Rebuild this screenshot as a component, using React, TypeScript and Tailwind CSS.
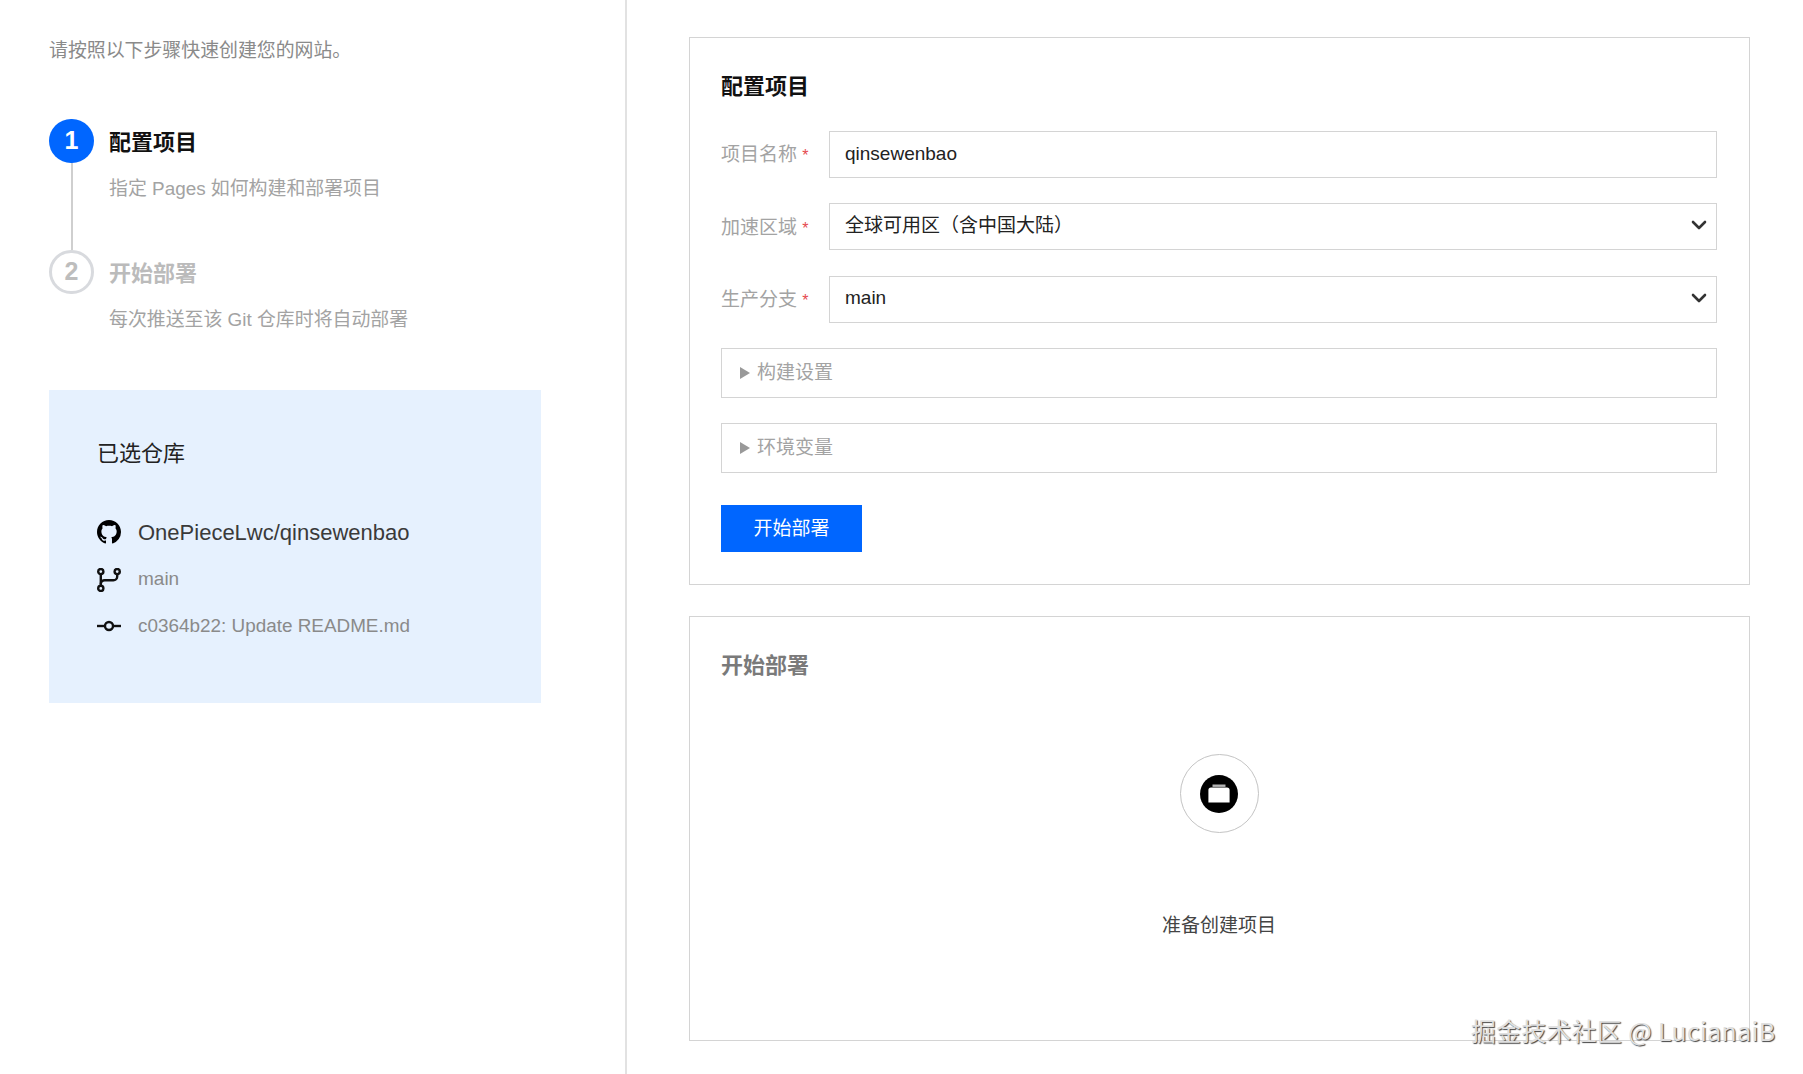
import type { ReactNode } from "react";
import { ChevronDown } from "lucide-react";

const font = "font-['Liberation_Sans','Noto_Sans_CJK_SC',sans-serif]";

const GithubMark = () => (
  <svg width="24" height="24" viewBox="0 0 16 16" fill="#000">
    <path d="M8 0C3.58 0 0 3.58 0 8c0 3.54 2.29 6.53 5.47 7.59.4.07.55-.17.55-.38 0-.19-.01-.82-.01-1.49-2.01.37-2.53-.49-2.69-.94-.09-.23-.48-.94-.82-1.13-.28-.15-.68-.52-.01-.53.63-.01 1.08.58 1.23.82.72 1.21 1.87.87 2.33.66.07-.52.28-.87.51-1.07-1.78-.2-3.64-.89-3.64-3.95 0-.87.31-1.59.82-2.15-.08-.2-.36-1.02.08-2.12 0 0 .67-.21 2.2.82.64-.18 1.32-.27 2-.27s1.36.09 2 .27c1.53-1.04 2.2-.82 2.2-.82.44 1.1.16 1.92.08 2.12.51.56.82 1.27.82 2.15 0 3.07-1.87 3.75-3.65 3.95.29.25.54.73.54 1.48 0 1.07-.01 1.93-.01 2.2 0 .21.15.46.55.38A8.01 8.01 0 0 0 16 8c0-4.42-3.58-8-8-8Z" />
  </svg>
);

const BranchIcon = () => (
  <svg width="24" height="24" viewBox="0 0 24 24" fill="none" stroke="#111" strokeWidth="2.4">
    <circle cx="3.8" cy="3.6" r="2.6" />
    <circle cx="20.2" cy="3.6" r="2.6" />
    <circle cx="3.8" cy="20.4" r="2.6" />
    <path d="M3.8 6.2V17.8" />
    <path d="M20.2 6.2V8.5A3.8 3.8 0 0 1 16.4 12.3H7.6A3.8 3.8 0 0 0 3.8 16" />
  </svg>
);

const CommitIcon = () => (
  <svg width="24" height="24" viewBox="0 0 24 24" fill="none" stroke="#111" strokeWidth="2.4" className="mb-[2px]">
    <circle cx="12" cy="12" r="4" />
    <path d="M0 12H8" />
    <path d="M16 12H24" />
  </svg>
);

const Step = ({ num, title, desc, active, last }: { num: number; title: string; desc: string; active?: boolean; last?: boolean }) => (
  <div className="flex gap-[15px] h-[131px]">
    <div className="flex flex-col items-center w-[45px]">
      <div
        className={`w-[45px] h-[44px] shrink-0 rounded-full flex items-center justify-center text-[25px] font-bold ${
          active ? "bg-[#0066ff] text-white" : "border-[3px] border-[#d8dade] text-[#bdbdbd]"
        }`}
      >
        {num}
      </div>
      {!last && <div className="w-[2px] flex-1 bg-[#cfcfcf]" />}
    </div>
    <div>
      <div className={`h-[48px] leading-[48px] text-[22px] font-bold ${active ? "text-[#111]" : "text-[#bbb]"}`}>{title}</div>
      <div className="mt-2 leading-[28px] text-[18.9px] text-[#a3a3a3]">{desc}</div>
    </div>
  </div>
);

const Field = ({ label, children }: { label: string; children: ReactNode }) => (
  <div className="flex items-center h-[47px]">
    <label className="w-[108px] shrink-0 pt-[2px] text-[19px] text-[#a3a3a3]">
      {label} <span className="text-[#e5484d] text-[16px]">*</span>
    </label>
    {children}
  </div>
);

const SelectBox = ({ value }: { value: string }) => (
  <div className="relative flex-1 h-full">
    <select
      defaultValue={value}
      className="w-full h-full appearance-none border border-[#d4d4d4] bg-white pl-[15px] pb-[2px] text-[19px] text-[#222] outline-none"
    >
      <option>{value}</option>
    </select>
    <ChevronDown size={24} strokeWidth={2.6} className="absolute right-[6px] top-[10px] text-[#333] pointer-events-none" />
  </div>
);

const Collapse = ({ label }: { label: string }) => (
  <details className="border border-[#d4d4d4] h-[50px]">
    <summary className="list-none flex items-center h-full pl-[18px] gap-[7px] text-[19px] text-[#a3a3a3]">
      <svg width="10" height="12" viewBox="0 0 10 12">
        <path d="M0 0L10 6L0 12Z" fill="#999" />
      </svg>
      {label}
    </summary>
  </details>
);

export default function App() {
  return (
    <div className={`${font} relative flex h-[1074px] overflow-hidden bg-white`}>
      <aside className="w-[627px] shrink-0 border-r-2 border-[#e2e2e2] pl-[49px] pt-[37px]">
        <p className="leading-[28px] text-[18.9px] text-[#8a8a8a]">请按照以下步骤快速创建您的网站。</p>
        <div className="mt-[54px]">
          <Step num={1} title="配置项目" desc="指定 Pages 如何构建和部署项目" active />
          <Step num={2} title="开始部署" desc="每次推送至该 Git 仓库时将自动部署" last />
        </div>
        <div className="mt-[9px] w-[492px] h-[313px] bg-[#e6f1fe] pl-[48px] pt-[49px]">
          <h3 className="text-[22px] leading-[30px] text-[#222]">已选仓库</h3>
          <div className="mt-[39px]">
            <div className="flex items-center gap-[17px] h-[48px]">
              <GithubMark />
              <span className="text-[22px] text-[#3a3a3a]">OnePieceLwc/qinsewenbao</span>
            </div>
            <div className="flex items-center gap-[17px] h-[47px]">
              <BranchIcon />
              <span className="text-[19px] text-[#8a8a8a]">main</span>
            </div>
            <div className="flex items-center gap-[17px] h-[47px]">
              <CommitIcon />
              <span className="text-[18.9px] text-[#8a8a8a]">c0364b22: Update README.md</span>
            </div>
          </div>
        </div>
      </aside>

      <main className="flex-1 pl-[62px] pr-[53px] pt-[37px]">
        <section className="h-[548px] border border-[#d4d4d4] pl-[31px] pr-[32px] pt-[33px]">
          <h2 className="text-[22px] leading-[32px] font-bold text-[#111]">配置项目</h2>
          <div className="mt-[28px] flex flex-col gap-[25.3px]">
            <Field label="项目名称">
              <input
                readOnly
                value="qinsewenbao"
                className="flex-1 h-full border border-[#d4d4d4] pl-[15px] pb-[2px] text-[19px] text-[#222] outline-none"
              />
            </Field>
            <Field label="加速区域">
              <SelectBox value="全球可用区（含中国大陆）" />
            </Field>
            <Field label="生产分支">
              <SelectBox value="main" />
            </Field>
            <Collapse label="构建设置" />
            <Collapse label="环境变量" />
          </div>
          <button className="mt-[32px] w-[141px] h-[47px] pt-[1px] bg-[#0066ff] text-white text-[19px]">开始部署</button>
        </section>

        <section className="mt-[31px] h-[425px] border border-[#d4d4d4] pl-[31px] pr-[32px] pt-[33px]">
          <h2 className="text-[22px] leading-[32px] font-bold text-[#7a7a7a]">开始部署</h2>
          <div className="mt-[72px] flex flex-col items-center">
            <div className="w-[79px] h-[79px] rounded-full border border-[#c4c4c4] flex items-center justify-center">
              <svg width="38" height="38" viewBox="0 0 38 38">
                <circle cx="19" cy="19" r="19" fill="#000" />
                <rect x="12.5" y="9.5" width="13" height="2.4" fill="#b5b5b5" />
                <path d="M11 12.4H27A2.6 2.6 0 0 1 29.6 15V27.4H8.4V15A2.6 2.6 0 0 1 11 12.4Z" fill="#fff" />
              </svg>
            </div>
            <p className="mt-[79px] text-[19px] text-[#444]">准备创建项目</p>
          </div>
        </section>
      </main>

      <div className="absolute left-[1471px] top-[1013px] font-['Noto_Sans_CJK_SC',sans-serif] text-[24.8px] leading-[34px] tracking-[0.4px] whitespace-nowrap text-[#e0e0e0] [text-shadow:1px_1px_1px_#444]">
        掘金技术社区 @ LucianaiB
      </div>
    </div>
  );
}
